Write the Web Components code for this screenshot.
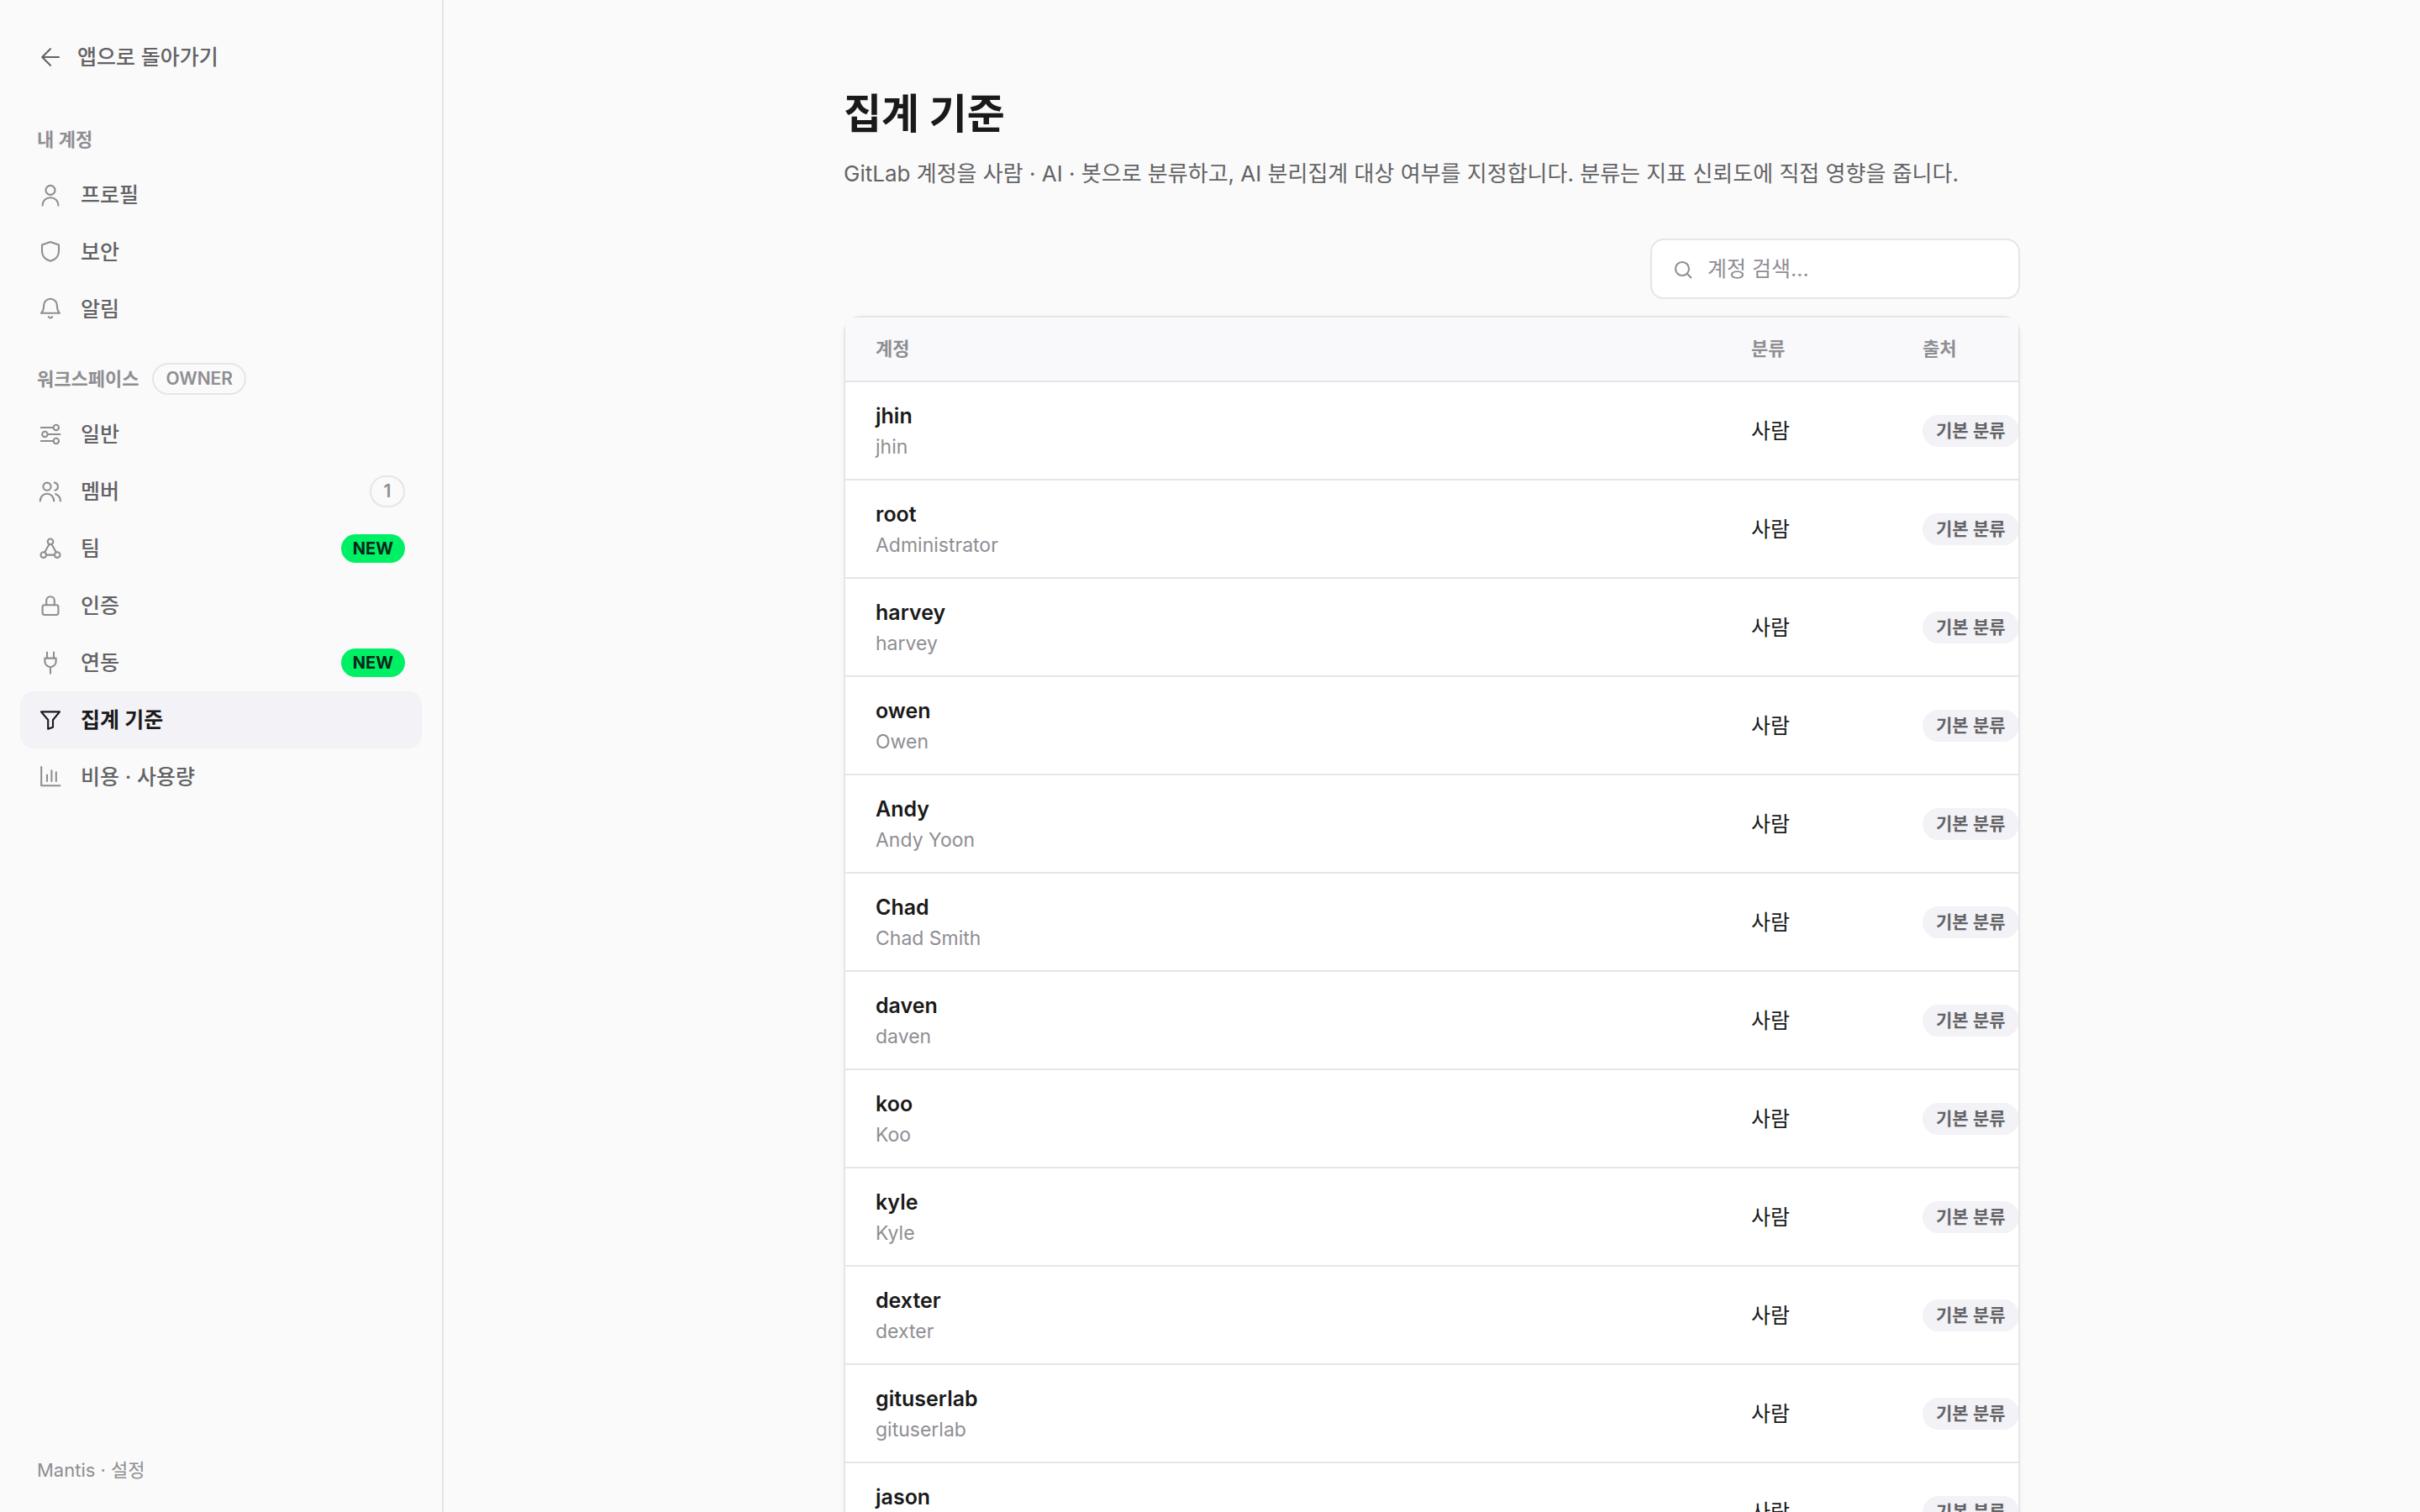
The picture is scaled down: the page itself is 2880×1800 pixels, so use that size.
<!DOCTYPE html>
<html lang="ko">
<head>
<meta charset="UTF-8">
<meta name="viewport" content="width=device-width, initial-scale=1.0">
<title>Mantis · 설정</title>
<style>
    :root {
        --bg: #fafafa;
        --surface: #ffffff;
        --surface-head: #f9f9fb;
        --surface-active: #f2f2f7;
        --border: #e5e5ea;
        --text: #1a1a1a;
        --text-secondary: #636366;
        --text-muted: #8e8e93;
        --accent: #00f065;
        --on-accent: #06251b;
    }

    body {
        margin: 0;
        height: 100vh;
        overflow: hidden;
        background: var(--bg);
        color: var(--text);
        font-family: Inter, "Noto Sans CJK KR", sans-serif;
        font-size: 25px;
        line-height: 36px;
    }
</style>
</head>
<body>
<settings-layout>
    <settings-sidebar slot="sidebar">
        <nav-section heading="내 계정">
            <nav-item icon="user">프로필</nav-item>
            <nav-item icon="shield">보안</nav-item>
            <nav-item icon="bell">알림</nav-item>
        </nav-section>
        <nav-section heading="워크스페이스">
            <pill-badge slot="badge">OWNER</pill-badge>
            <nav-item icon="sliders">일반</nav-item>
            <nav-item icon="users">멤버<pill-badge slot="badge">1</pill-badge></nav-item>
            <nav-item icon="team">팀<pill-badge slot="badge" variant="new">NEW</pill-badge></nav-item>
            <nav-item icon="lock">인증</nav-item>
            <nav-item icon="plug">연동<pill-badge slot="badge" variant="new">NEW</pill-badge></nav-item>
            <nav-item icon="filter" active>집계 기준</nav-item>
            <nav-item icon="chart">비용 · 사용량</nav-item>
        </nav-section>
        <span slot="footer">Mantis · 설정</span>
    </settings-sidebar>

    <page-header>
        <span slot="title">집계 기준</span>
        GitLab 계정을 사람 · AI · 봇으로 분류하고, AI 분리집계 대상 여부를 지정합니다. 분류는 지표 신뢰도에 직접 영향을 줍니다.
    </page-header>
    <search-field label="계정 검색" placeholder="계정 검색..."></search-field>
    <account-table></account-table>
</settings-layout>

<script>
const ICONS = {
    back: '<path d="M26 16H6.4M16 6.2 6.2 16l9.8 9.8"/>',
    user: '<circle cx="16" cy="10.4" r="5.5"/><path d="M6.6 28.6v-.4a9.4 9 0 0 1 18.8 0v.4"/>',
    shield: '<path d="M16 3.9 26 7.5V15c0 6-4 10-10 11.8C10 25 6 21 6 15V7.5z"/>',
    bell: '<path d="M5 20.8C7.4 18.6 8 16 8.2 11.4a7.8 7.6 0 0 1 15.6 0C24 16 24.6 18.6 27 20.8z"/><path d="M13.8 25.2a2.5 2.2 0 0 0 4.4 0"/>',
    sliders: '<path d="M4.8 8h14.4M13 16h14.4M4.8 24h14.4"/><circle cx="22.8" cy="8" r="3.2"/><circle cx="9.4" cy="16" r="3.2"/><circle cx="22.8" cy="24" r="3.2"/>',
    users: '<circle cx="12" cy="10.2" r="4.6"/><path d="M3.8 27.4a8.2 8.6 0 0 1 16.4 0M20.8 5.6a4.7 4.7 0 0 1 .6 9.2M22.2 19.2c3.4 1.2 5.6 4.4 5.8 8.2"/>',
    team: '<circle cx="16" cy="7.8" r="3.3"/><circle cx="7.8" cy="23.6" r="3.3"/><circle cx="24.2" cy="23.6" r="3.3"/><path d="M14.6 10.8 9.2 20.6M17.4 10.8l5.4 9.8M11.2 23.6h9.6"/>',
    lock: '<rect x="6.6" y="15.2" width="18.8" height="11.8" rx="2.4"/><path d="M11.2 15.2V10a4.8 4.8 0 0 1 9.6 0v5.2"/>',
    plug: '<path d="M12 3.6v6.8M20 3.6v6.8M9.4 10.6h13.2v3.8a6.6 6.6 0 0 1-13.2 0zM16 21.2v7.4"/>',
    filter: '<path d="M5 6.4h22l-8 9.6v8.8l-5.8 2V16z"/>',
    chart: '<path d="M5.2 4v22.2H27.4M12 13.6v7.4M17.4 8.4V21M22.8 10.4V21"/>',
    search: '<circle cx="14" cy="16" r="8"/><path d="m20 22 4.4 4.4"/>'
};

function icon(name) {
    return `
        <svg width="32" height="32" viewBox="0 0 32 32" fill="none" stroke="currentColor" stroke-width="2.1"
            stroke-linecap="round" stroke-linejoin="round" aria-hidden="true">${ICONS[name]}</svg>`;
}

class SettingsLayout extends HTMLElement {
    constructor() {
        super();
        this.attachShadow({ mode: 'open' });
        this.shadowRoot.innerHTML = `
            <style>
                :host {
                    display: grid;
                    grid-template-columns: auto 1fr;
                    height: 100%;
                }
                main {
                    overflow-y: auto;
                    scrollbar-width: none;
                    padding: 106px 64px;
                }
                .content {
                    max-width: 1400px;
                    margin: 0 auto;
                    display: flex;
                    flex-direction: column;
                    gap: 20px;
                }
            </style>
            <slot name="sidebar"></slot>
            <main>
                <div class="content"><slot></slot></div>
            </main>
        `;
    }
}

class SettingsSidebar extends HTMLElement {
    constructor() {
        super();
        this.attachShadow({ mode: 'open' });
        this.shadowRoot.innerHTML = `
            <style>
                :host {
                    display: flex;
                    flex-direction: column;
                    box-sizing: border-box;
                    width: 528px;
                    padding: 34px 24px 32px;
                    border-right: 2px solid var(--border);
                }
                a {
                    display: flex;
                    align-items: center;
                    gap: 16px;
                    height: 68px;
                    padding: 0 20px;
                    color: var(--text-secondary);
                    font-weight: 500;
                    text-decoration: none;
                }
                nav {
                    display: flex;
                    flex-direction: column;
                    margin-top: 32px;
                    gap: 17px;
                }
                footer {
                    margin-top: auto;
                    padding: 0 20px;
                    color: var(--text-muted);
                    font-size: 22px;
                }
            </style>
            <a href="#">${icon('back')}앱으로 돌아가기</a>
            <nav><slot></slot></nav>
            <footer><slot name="footer"></slot></footer>
        `;
    }
}

class NavSection extends HTMLElement {
    constructor() {
        super();
        this.attachShadow({ mode: 'open' });
        this.shadowRoot.innerHTML = `
            <style>
                :host {
                    display: block;
                }
                header {
                    display: flex;
                    align-items: center;
                    gap: 16px;
                    height: 64px;
                    padding: 0 20px;
                }
                h2 {
                    margin: 0;
                    color: var(--text-muted);
                    font-size: 22px;
                    font-weight: 600;
                }
            </style>
            <header>
                <h2></h2>
                <slot name="badge"></slot>
            </header>
            <slot></slot>
        `;
        this.shadowRoot.querySelector('h2').textContent = this.getAttribute('heading');
    }
}

class NavItem extends HTMLElement {
    constructor() {
        super();
        this.attachShadow({ mode: 'open' });
        this.shadowRoot.innerHTML = `
            <style>
                :host {
                    display: block;
                }
                a {
                    display: flex;
                    align-items: center;
                    gap: 20px;
                    height: 68px;
                    padding: 0 20px;
                    border-radius: 16px;
                    color: var(--text-secondary);
                    font-weight: 500;
                    text-decoration: none;
                }
                svg {
                    color: var(--text-muted);
                }
                .label {
                    flex: 1;
                }
                :host([active]) a {
                    background: var(--surface-active);
                    color: var(--text);
                    font-weight: 600;
                }
                :host([active]) svg {
                    color: var(--text);
                }
            </style>
            <a href="#">
                ${icon(this.getAttribute('icon'))}
                <span class="label"><slot></slot></span>
                <slot name="badge"></slot>
            </a>
        `;
        if (this.hasAttribute('active')) {
            this.shadowRoot.querySelector('a').setAttribute('aria-current', 'page');
        }
    }
}

class PillBadge extends HTMLElement {
    constructor() {
        super();
        this.attachShadow({ mode: 'open' });
        this.shadowRoot.innerHTML = `
            <style>
                :host {
                    display: inline-block;
                    box-sizing: border-box;
                    min-width: 42px;
                    padding: 0 14px;
                    border: 2px solid var(--border);
                    border-radius: 19px;
                    color: var(--text-muted);
                    font-size: 21px;
                    font-weight: 600;
                    line-height: 34px;
                    text-align: center;
                }
                :host([variant="new"]) {
                    border: 0;
                    background: var(--accent);
                    color: var(--on-accent);
                    font-size: 20px;
                    font-weight: 700;
                }
                :host([variant="soft"]) {
                    border-color: var(--surface-active);
                    background: var(--surface-active);
                    color: var(--text-secondary);
                }
            </style>
            <slot></slot>
        `;
    }
}

class PageHeader extends HTMLElement {
    constructor() {
        super();
        this.attachShadow({ mode: 'open' });
        this.shadowRoot.innerHTML = `
            <style>
                :host {
                    display: block;
                    margin-bottom: 35px;
                }
                h1 {
                    margin: 0 0 19px;
                    font-size: 49px;
                    font-weight: 700;
                    line-height: 60px;
                }
                p {
                    margin: 0;
                    color: var(--text-secondary);
                    font-size: 26px;
                    line-height: 44px;
                }
            </style>
            <h1><slot name="title"></slot></h1>
            <p><slot></slot></p>
        `;
    }
}

class SearchField extends HTMLElement {
    constructor() {
        super();
        this.attachShadow({ mode: 'open' });
        this.shadowRoot.innerHTML = `
            <style>
                :host {
                    display: block;
                    align-self: flex-end;
                    width: 440px;
                }
                label {
                    display: flex;
                    align-items: center;
                    gap: 12px;
                    box-sizing: border-box;
                    height: 72px;
                    padding: 0 22px;
                    border: 2px solid var(--border);
                    border-radius: 16px;
                    background: var(--surface);
                    color: var(--text-muted);
                }
                input {
                    flex: 1;
                    min-width: 0;
                    padding: 0;
                    border: 0;
                    outline: 0;
                    background: none;
                    color: var(--text);
                    font: inherit;
                }
                input::placeholder {
                    color: var(--text-muted);
                }
            </style>
            <label>
                ${icon('search')}
                <input type="text">
            </label>
        `;
        const input = this.shadowRoot.querySelector('input');
        input.placeholder = this.getAttribute('placeholder');
        input.setAttribute('aria-label', this.getAttribute('label'));
    }
}

const ACCOUNTS = [
    ['jhin', 'jhin'],
    ['root', 'Administrator'],
    ['harvey', 'harvey'],
    ['owen', 'Owen'],
    ['Andy', 'Andy Yoon'],
    ['Chad', 'Chad Smith'],
    ['daven', 'daven'],
    ['koo', 'Koo'],
    ['kyle', 'Kyle'],
    ['dexter', 'dexter'],
    ['gituserlab', 'gituserlab'],
    ['jason', 'jason']
];

class AccountTable extends HTMLElement {
    constructor() {
        super();
        this.attachShadow({ mode: 'open' });
        this.shadowRoot.innerHTML = `
            <style>
                :host {
                    display: block;
                    border: 2px solid var(--border);
                    border-radius: 20px;
                    background: var(--surface);
                    box-shadow: 0 2px 6px rgba(0, 0, 0, 0.04);
                }
                /* wide cells are cut at the card's edge */
                .clip {
                    overflow: hidden;
                }
                table {
                    width: 100%;
                    table-layout: fixed;
                    border-spacing: 0;
                }
                .kind {
                    width: 204px;
                }
                .source {
                    width: 150px;
                }
                th, td {
                    box-sizing: border-box;
                    padding: 0 0 0 36px;
                    border-bottom: 2px solid var(--border);
                    text-align: left;
                    white-space: nowrap;
                }
                th {
                    height: 77px;
                    padding-bottom: 2px;
                    background: var(--surface-head);
                    color: var(--text-muted);
                    font-size: 22px;
                    font-weight: 600;
                }
                td {
                    height: 117px;
                }
                .name {
                    line-height: 38px;
                    font-weight: 600;
                }
                .alias {
                    color: var(--text-muted);
                    font-size: 23px;
                }
            </style>
            <div class="clip">
                <table>
                    <colgroup><col><col class="kind"><col class="source"></colgroup>
                    <thead>
                        <tr><th>계정</th><th>분류</th><th>출처</th></tr>
                    </thead>
                    <tbody></tbody>
                </table>
            </div>
        `;
        this.renderRows(ACCOUNTS);
    }

    renderRows(accounts) {
        const body = this.shadowRoot.querySelector('tbody');
        accounts.forEach(([name, alias]) => {
            const row = document.createElement('tr');
            row.innerHTML = `
                <td><div class="name">${name}</div><div class="alias">${alias}</div></td>
                <td>사람</td>
                <td><pill-badge variant="soft">기본 분류</pill-badge></td>
            `;
            body.appendChild(row);
        });
    }
}

customElements.define('settings-layout', SettingsLayout);
customElements.define('settings-sidebar', SettingsSidebar);
customElements.define('nav-section', NavSection);
customElements.define('nav-item', NavItem);
customElements.define('pill-badge', PillBadge);
customElements.define('page-header', PageHeader);
customElements.define('search-field', SearchField);
customElements.define('account-table', AccountTable);
</script>
</body>
</html>
